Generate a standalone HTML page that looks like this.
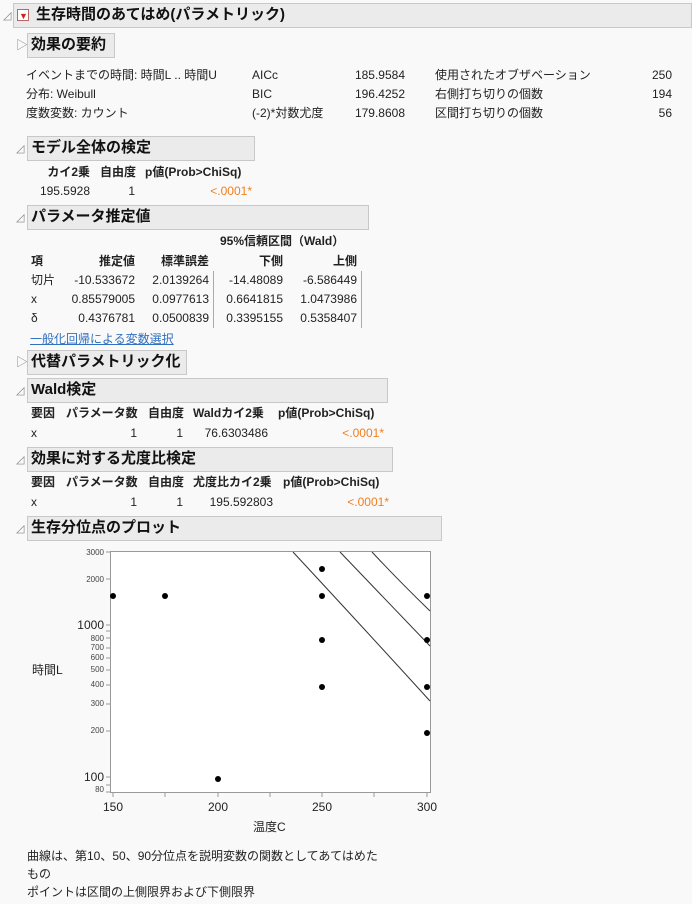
<!DOCTYPE html>
<html><head><meta charset="utf-8"><style>
body{margin:0;width:692px;height:904px;background:#f9f9f9;font-family:"Liberation Sans","Noto Sans CJK JP",sans-serif;font-size:12px;color:#222;position:relative;overflow:hidden}
div,span{position:absolute;white-space:nowrap;line-height:16px}
.h{background:#ebebeb;border:1px solid #c8c8c8;font-weight:bold;font-size:15px;line-height:22px;padding-left:3px;box-sizing:border-box;height:25px;color:#111}
.r{text-align:right}
.b{font-weight:bold}
.o{color:#f08020}
.vl{background:#aaa;width:1px}
.tri{color:#888;font-size:11px}
</style></head><body>
<div class="tri" style="left:3px;top:8px">◿</div>
<div class="h" style="left:13px;top:3px;width:679px;padding-left:22px">生存時間のあてはめ(パラメトリック)</div>
<div style="left:17px;top:9px;width:12px;height:12px;border:1px solid #b66;background:#fff;box-sizing:border-box"></div>
<div style="left:19px;top:8px;color:#d02020;font-size:9px">▼</div>

<div style="left:16px;top:37px;color:#888">▷</div>
<div class="h" style="left:27px;top:33px;width:88px">効果の要約</div>
<div style="left:26px;top:67px">イベントまでの時間: 時間L .. 時間U</div>
<div style="left:26px;top:86px">分布: Weibull</div>
<div style="left:26px;top:105px">度数変数: カウント</div>
<div style="left:252px;top:67px">AICc</div>
<div style="left:252px;top:86px">BIC</div>
<div style="left:252px;top:105px">(-2)*対数尤度</div>
<div class="r" style="left:330px;width:75px;top:67px">185.9584</div>
<div class="r" style="left:330px;width:75px;top:86px">196.4252</div>
<div class="r" style="left:330px;width:75px;top:105px">179.8608</div>
<div style="left:435px;top:67px">使用されたオブザベーション</div>
<div style="left:435px;top:86px">右側打ち切りの個数</div>
<div style="left:435px;top:105px">区間打ち切りの個数</div>
<div class="r" style="left:600px;width:72px;top:67px">250</div>
<div class="r" style="left:600px;width:72px;top:86px">194</div>
<div class="r" style="left:600px;width:72px;top:105px">56</div>

<div class="tri" style="left:16px;top:141px">◿</div>
<div class="h" style="left:27px;top:136px;width:228px">モデル全体の検定</div>
<div class="b r" style="left:30px;width:60px;top:164px">カイ2乗</div>
<div class="b" style="left:100px;top:164px">自由度</div>
<div class="b" style="left:145px;top:164px">p値(Prob&gt;ChiSq)</div>
<div class="r" style="left:30px;width:60px;top:183px">195.5928</div>
<div class="r" style="left:100px;width:35px;top:183px">1</div>
<div class="o r" style="left:145px;width:107px;top:183px">&lt;.0001*</div>

<div class="tri" style="left:16px;top:210px">◿</div>
<div class="h" style="left:27px;top:205px;width:342px">パラメータ推定値</div>
<div class="b" style="left:220px;top:233px">95%信頼区間（Wald）</div>
<div class="b" style="left:31px;top:253px">項</div>
<div class="b r" style="left:60px;width:75px;top:253px">推定値</div>
<div class="b r" style="left:140px;width:69px;top:253px">標準誤差</div>
<div class="b r" style="left:215px;width:68px;top:253px">下側</div>
<div class="b r" style="left:290px;width:67px;top:253px">上側</div>
<div class="vl" style="left:213px;top:271px;height:57px"></div>
<div class="vl" style="left:361px;top:271px;height:57px"></div>
<div style="left:31px;top:272px">切片</div><div class="r" style="left:60px;width:75px;top:272px">-10.533672</div><div class="r" style="left:140px;width:69px;top:272px">2.0139264</div><div class="r" style="left:215px;width:68px;top:272px">-14.48089</div><div class="r" style="left:290px;width:67px;top:272px">-6.586449</div>
<div style="left:31px;top:291px">x</div><div class="r" style="left:60px;width:75px;top:291px">0.85579005</div><div class="r" style="left:140px;width:69px;top:291px">0.0977613</div><div class="r" style="left:215px;width:68px;top:291px">0.6641815</div><div class="r" style="left:290px;width:67px;top:291px">1.0473986</div>
<div style="left:31px;top:310px">δ</div><div class="r" style="left:60px;width:75px;top:310px">0.4376781</div><div class="r" style="left:140px;width:69px;top:310px">0.0500839</div><div class="r" style="left:215px;width:68px;top:310px">0.3395155</div><div class="r" style="left:290px;width:67px;top:310px">0.5358407</div>
<div style="left:30px;top:331px;color:#3070c0;text-decoration:underline">一般化回帰による変数選択</div>

<div style="left:16px;top:354px;color:#888">▷</div>
<div class="h" style="left:27px;top:350px;width:160px">代替パラメトリック化</div>

<div class="tri" style="left:16px;top:383px">◿</div>
<div class="h" style="left:27px;top:378px;width:361px">Wald検定</div>
<div class="b" style="left:31px;top:405px">要因</div>
<div class="b" style="left:66px;top:405px">パラメータ数</div>
<div class="b" style="left:148px;top:405px">自由度</div>
<div class="b" style="left:193px;top:405px">Waldカイ2乗</div>
<div class="b" style="left:278px;top:405px">p値(Prob&gt;ChiSq)</div>
<div style="left:31px;top:425px">x</div>
<div class="r" style="left:66px;width:71px;top:425px">1</div>
<div class="r" style="left:148px;width:35px;top:425px">1</div>
<div class="r" style="left:193px;width:75px;top:425px">76.6303486</div>
<div class="o r" style="left:278px;width:106px;top:425px">&lt;.0001*</div>

<div class="tri" style="left:16px;top:452px">◿</div>
<div class="h" style="left:27px;top:447px;width:366px">効果に対する尤度比検定</div>
<div class="b" style="left:31px;top:474px">要因</div>
<div class="b" style="left:66px;top:474px">パラメータ数</div>
<div class="b" style="left:148px;top:474px">自由度</div>
<div class="b" style="left:193px;top:474px">尤度比カイ2乗</div>
<div class="b" style="left:283px;top:474px">p値(Prob&gt;ChiSq)</div>
<div style="left:31px;top:494px">x</div>
<div class="r" style="left:66px;width:71px;top:494px">1</div>
<div class="r" style="left:148px;width:35px;top:494px">1</div>
<div class="r" style="left:193px;width:80px;top:494px">195.592803</div>
<div class="o r" style="left:283px;width:106px;top:494px">&lt;.0001*</div>

<div class="tri" style="left:16px;top:521px">◿</div>
<div class="h" style="left:27px;top:516px;width:415px">生存分位点のプロット</div>

<svg style="position:absolute;left:0;top:0" width="692" height="904">
<rect x="110.5" y="551.5" width="320" height="241" fill="#fff" stroke="#999"/>
<g stroke="#333" fill="none" stroke-width="1">
<path d="M293 552 Q358 622 430 701"/>
<path d="M340 552 Q383 597 430 646"/>
<path d="M372 552 Q399 581 430 611"/>
</g>
<g fill="#000">
<circle cx="113" cy="596" r="3"/><circle cx="165" cy="596" r="3"/><circle cx="218" cy="779" r="3"/>
<circle cx="322" cy="569" r="3"/><circle cx="322" cy="596" r="3"/><circle cx="322" cy="640" r="3"/><circle cx="322" cy="687" r="3"/>
<circle cx="427" cy="596" r="3"/><circle cx="427" cy="640" r="3"/><circle cx="427" cy="687" r="3"/><circle cx="427" cy="733" r="3"/>
</g>
<g stroke="#999">
<path d="M106 552h4M106 579h4M106 625h4M106 631h4M106 638h4M106 648h4M106 658h4M106 670h4M106 685h4M106 704h4M106 731h4M106 777h4M106 785h4M106 792h4"/>
<path d="M113 793v4M165 793v4M218 793v4M270 793v4M322 793v4M374 793v4M427 793v4"/>
</g>
<g font-family="Liberation Sans, sans-serif" font-size="8" fill="#444" text-anchor="end">
<text x="104" y="555">3000</text><text x="104" y="582">2000</text><text x="104" y="641">800</text><text x="104" y="650">700</text><text x="104" y="660">600</text><text x="104" y="672">500</text><text x="104" y="687">400</text><text x="104" y="706">300</text><text x="104" y="733">200</text><text x="104" y="792">80</text>
</g>
<g font-family="Liberation Sans, sans-serif" font-size="12" fill="#222">
<text x="104" y="629" text-anchor="end">1000</text><text x="104" y="781" text-anchor="end">100</text>
<text x="113" y="811" text-anchor="middle">150</text><text x="218" y="811" text-anchor="middle">200</text><text x="322" y="811" text-anchor="middle">250</text><text x="427" y="811" text-anchor="middle">300</text>
</g>
</svg>
<div style="left:32px;top:662px">時間L</div>
<div style="left:253px;top:819px">温度C</div>
<div style="left:27px;top:848px">曲線は、第10、50、90分位点を説明変数の関数としてあてはめた</div>
<div style="left:27px;top:866px">もの</div>
<div style="left:27px;top:884px">ポイントは区間の上側限界および下側限界</div>
</body></html>
